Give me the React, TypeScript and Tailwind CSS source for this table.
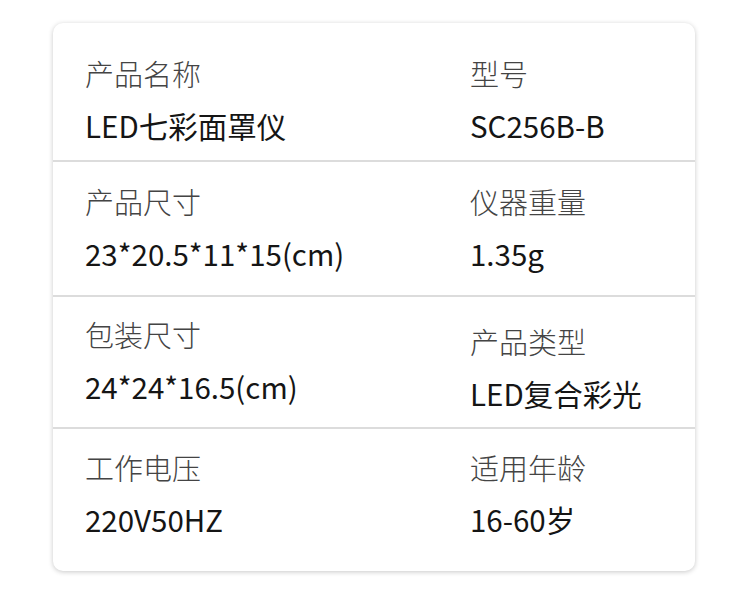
import React from "react";

type Cell = { label: string; value: string; pt: number };
type Row = { h: number; cells: [Cell, Cell]; divider: boolean };

const rows: Row[] = [
  {
    h: 137,
    divider: true,
    cells: [
      { label: "产品名称", value: "LED七彩面罩仪", pt: 29 },
      { label: "型号", value: "SC256B-B", pt: 29 },
    ],
  },
  {
    h: 133,
    divider: true,
    cells: [
      { label: "产品尺寸", value: "23*20.5*11*15(cm)", pt: 18 },
      { label: "仪器重量", value: "1.35g", pt: 18 },
    ],
  },
  {
    h: 130,
    divider: true,
    cells: [
      { label: "包装尺寸", value: "24*24*16.5(cm)", pt: 16 },
      { label: "产品类型", value: "LED复合彩光", pt: 23 },
    ],
  },
  {
    h: 142,
    divider: false,
    cells: [
      { label: "工作电压", value: "220V50HZ", pt: 17 },
      { label: "适用年龄", value: "16-60岁", pt: 17 },
    ],
  },
];

export default function App() {
  return (
    <div
      className="w-[750px] h-[600px] bg-white pt-[23px] pl-[53px]"
      style={{ fontFamily: '"Noto Sans CJK SC", "Noto Sans", sans-serif' }}
    >
      <div className="w-[642px] rounded-[10px] bg-white shadow-[0_1px_5px_rgba(0,0,0,0.22)] overflow-hidden">
        {rows.map((row, i) => (
          <div key={i}>
            <div className="grid grid-cols-[385px_1fr]" style={{ height: row.h }}>
              {row.cells.map((c, j) => (
                <div key={j} className="pl-8" style={{ paddingTop: c.pt }}>
                  <div className="text-[29px] leading-[42px] font-light text-[#444]">{c.label}</div>
                  <div className="mt-[10px] text-[29.5px] leading-[42px] font-normal text-[#151515]">{c.value}</div>
                </div>
              ))}
            </div>
            {row.divider && <div className="h-[2px] bg-[#dcdcdc]" />}
          </div>
        ))}
      </div>
    </div>
  );
}
